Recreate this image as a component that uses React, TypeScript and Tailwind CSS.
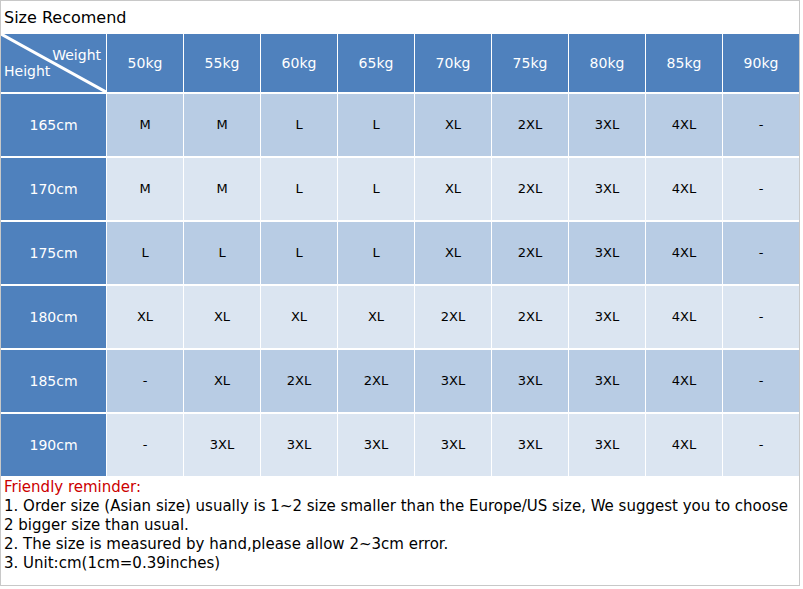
import React from "react";

const weights = ["50kg", "55kg", "60kg", "65kg", "70kg", "75kg", "80kg", "85kg", "90kg"];

const rows: { h: string; sizes: string[] }[] = [
	{ h: "165cm", sizes: ["M", "M", "L", "L", "XL", "2XL", "3XL", "4XL", "-"] },
	{ h: "170cm", sizes: ["M", "M", "L", "L", "XL", "2XL", "3XL", "4XL", "-"] },
	{ h: "175cm", sizes: ["L", "L", "L", "L", "XL", "2XL", "3XL", "4XL", "-"] },
	{ h: "180cm", sizes: ["XL", "XL", "XL", "XL", "2XL", "2XL", "3XL", "4XL", "-"] },
	{ h: "185cm", sizes: ["-", "XL", "2XL", "2XL", "3XL", "3XL", "3XL", "4XL", "-"] },
	{ h: "190cm", sizes: ["-", "3XL", "3XL", "3XL", "3XL", "3XL", "3XL", "4XL", "-"] },
];

export default function App() {
	return (
		<div className="h-[589px] w-[803px] bg-white font-['DejaVu_Sans',sans-serif]">
			<div className="w-[800px] border-[#c8c8c8] border-x">
				{/* Title */}
				<div className="flex h-[34px] items-center border-[#c8c8c8] border-t px-[3px] text-[16px] text-black">
					Size Recomend
				</div>

				{/* Table */}
				<div className="grid grid-cols-[105px_repeat(9,1fr)] gap-x-px gap-y-[2px] bg-white">
					<div className="relative h-[58px] bg-[#4f81bd] text-[14px] text-white">
						<svg className="absolute inset-0" height="58" viewBox="0 0 105 58" width="105">
							<line stroke="white" strokeWidth="3" x1="0" x2="105" y1="0" y2="58" />
						</svg>
						<span className="absolute top-[11px] right-[5px]">Weight</span>
						<span className="absolute bottom-[10px] left-[3px]">Height</span>
					</div>
					{weights.map((w) => (
						<div
							className="flex h-[58px] items-center justify-center bg-[#4f81bd] text-[14px] text-white"
							key={w}
						>
							{w}
						</div>
					))}

					{rows.map((r, i) => (
						<React.Fragment key={r.h}>
							<div className="flex h-[62px] items-center justify-center bg-[#4f81bd] text-[14px] text-white">
								{r.h}
							</div>
							{r.sizes.map((s, j) => (
								<div
									className={
										i % 2 === 0
											? "flex h-[62px] items-center justify-center bg-[#b8cce4] text-[13px] text-black"
											: "flex h-[62px] items-center justify-center bg-[#dbe5f1] text-[13px] text-black"
									}
									key={j}
								>
									{s}
								</div>
							))}
						</React.Fragment>
					))}
				</div>

				{/* Reminder */}
				<div className="h-[110px] border-[#c8c8c8] border-b px-[3px] pt-[2px] text-[15px] text-black leading-[19px]">
					<p className="text-[#cc0000]">Friendly reminder:</p>
					<p className="whitespace-nowrap">
						1. Order size (Asian size) usually is 1~2 size smaller than the Europe/US size, We suggest you to choose
					</p>
					<p>2 bigger size than usual.</p>
					<p>2. The size is measured by hand,please allow 2~3cm error.</p>
					<p>3. Unit:cm(1cm=0.39inches)</p>
				</div>
			</div>
		</div>
	);
}
